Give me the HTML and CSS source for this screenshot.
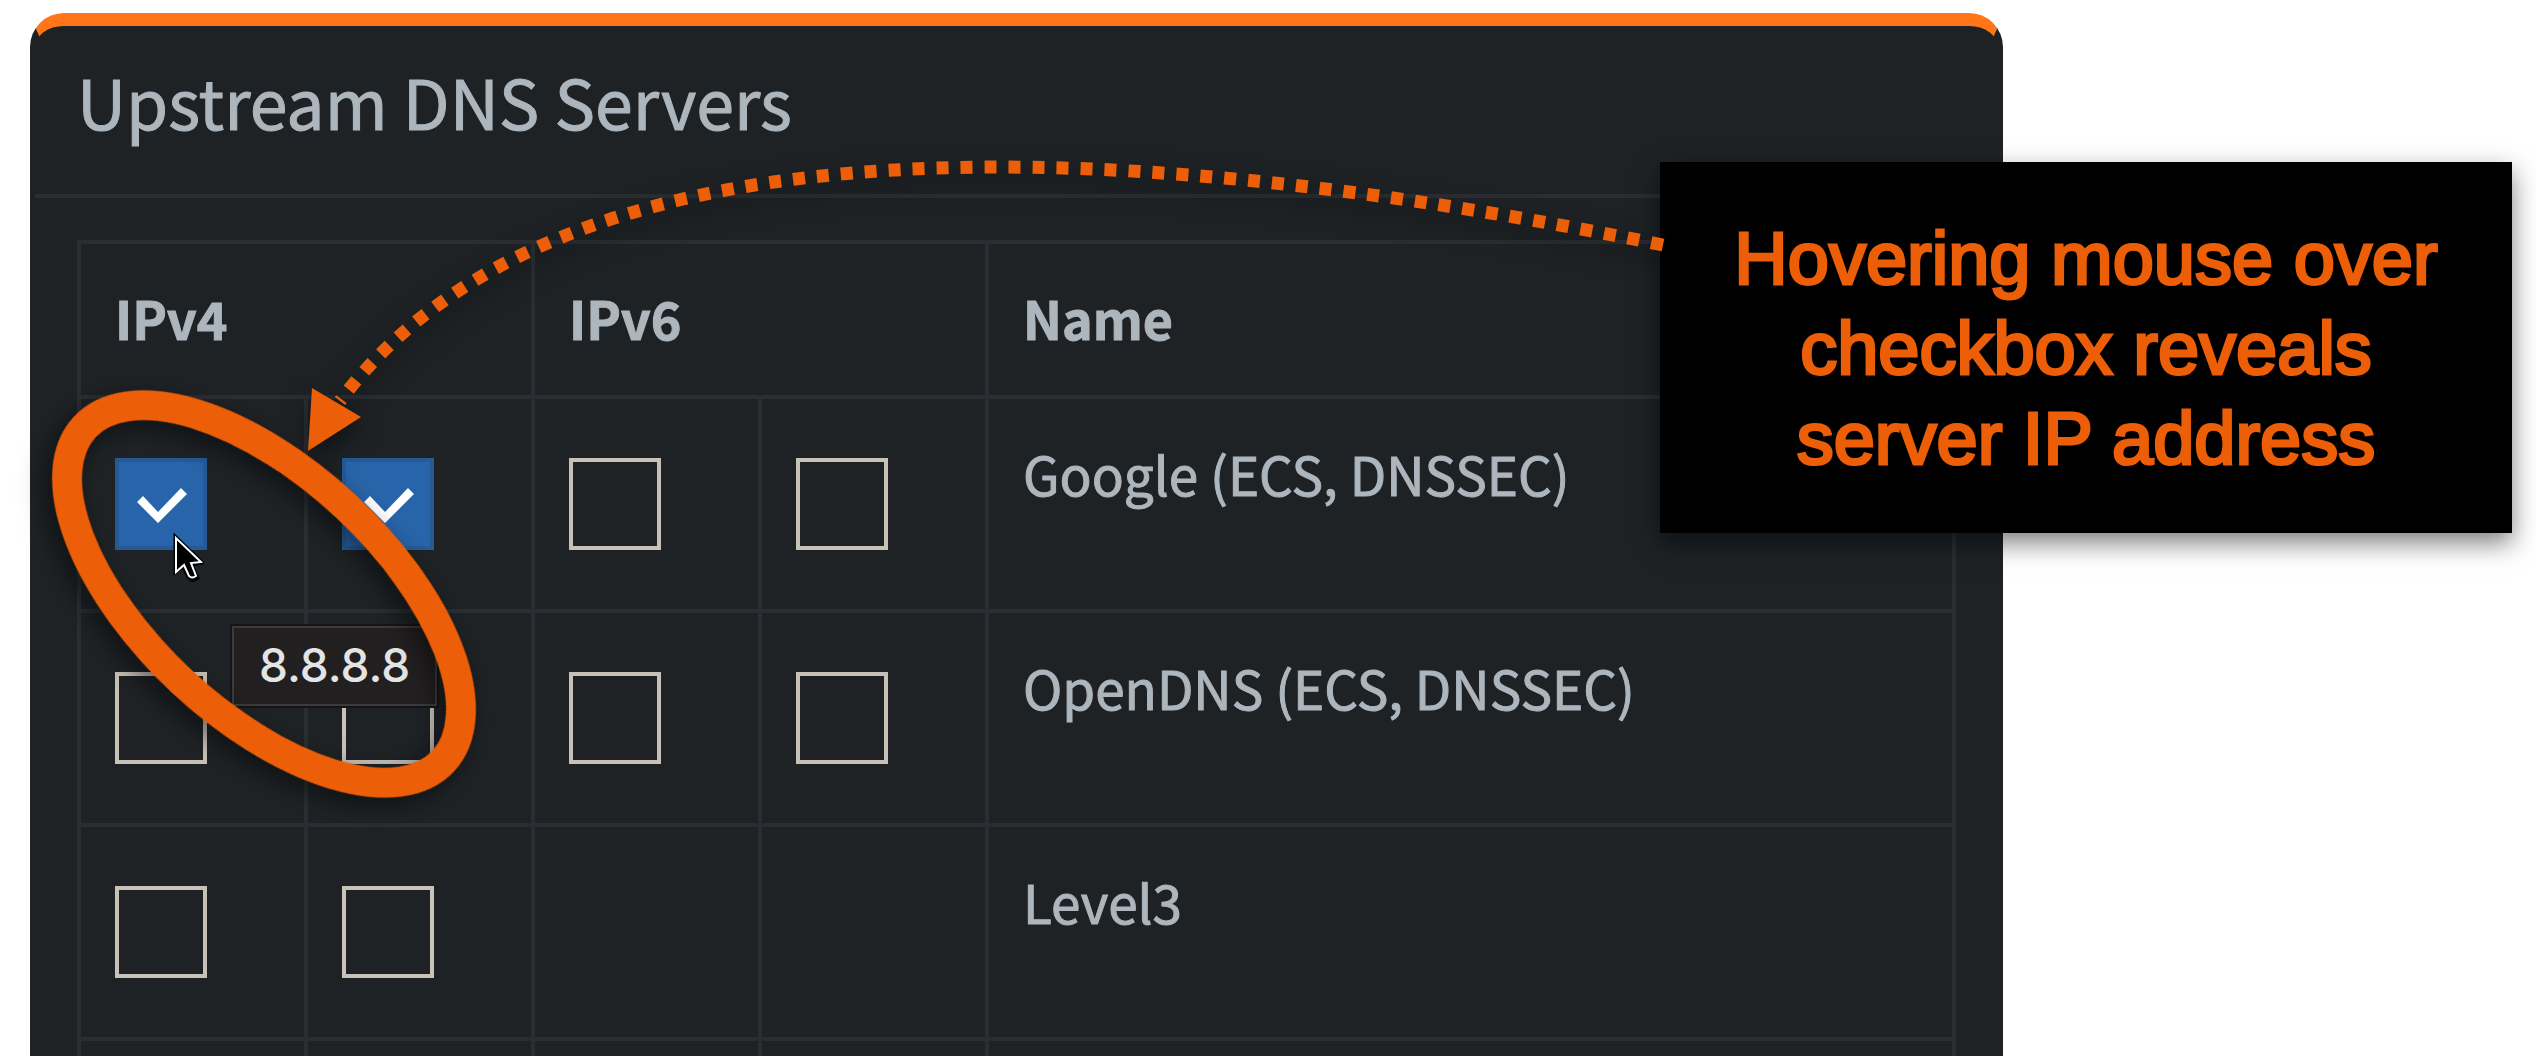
FILE: index.html
```html
<!DOCTYPE html>
<html lang="en">
<head>
<meta charset="utf-8">
<title>Upstream DNS Servers</title>
<link rel="stylesheet" href="styles.css">
</head>
<body>
<main class="page">
  <section class="card">
    <h1 class="card-title">Upstream DNS Servers</h1>
    <div class="card-body">
      <table class="servers">
        <colgroup>
          <col class="col-check"><col class="col-check"><col class="col-check"><col class="col-check"><col>
        </colgroup>
        <thead>
          <tr><th colspan="2">IPv4</th><th colspan="2">IPv6</th><th>Name</th></tr>
        </thead>
        <tbody>
          <tr>
            <td class="pick"><input class="check" type="checkbox" aria-labelledby="google" checked></td>
            <td class="pick"><input class="check" type="checkbox" aria-labelledby="google" checked></td>
            <td class="pick"><input class="check" type="checkbox" aria-labelledby="google"></td>
            <td class="pick"><input class="check" type="checkbox" aria-labelledby="google"></td>
            <td id="google">Google (ECS, DNSSEC)</td>
          </tr>
          <tr>
            <td class="pick"><input class="check" type="checkbox" aria-labelledby="opendns"></td>
            <td class="pick"><input class="check" type="checkbox" aria-labelledby="opendns"></td>
            <td class="pick"><input class="check" type="checkbox" aria-labelledby="opendns"></td>
            <td class="pick"><input class="check" type="checkbox" aria-labelledby="opendns"></td>
            <td id="opendns">OpenDNS (ECS, DNSSEC)</td>
          </tr>
          <tr>
            <td class="pick"><input class="check" type="checkbox" aria-labelledby="level3"></td>
            <td class="pick"><input class="check" type="checkbox" aria-labelledby="level3"></td>
            <td></td>
            <td></td>
            <td id="level3">Level3</td>
          </tr>
          <tr class="next-row"><td></td><td></td><td></td><td></td><td></td></tr>
        </tbody>
      </table>
    </div>
  </section>

  <div class="tooltip" role="tooltip">8.8.8.8</div>

  <svg class="cursor" width="32" height="50" viewBox="0 0 32 50" aria-hidden="true">
    <path d="M3 3 L3 40 L11 34 L16 44 Q20 50 26 45 L20 32 L31 30 Z" fill="#000" stroke="#000" stroke-width="3"/>
    <path d="M4 5 L4 39 L12 32 L17 43 Q20 46 24 43 L19 30 L29 29 Z" fill="#000" stroke="#fff" stroke-width="2"/>
  </svg>

  <p class="callout">Hovering mouse over<br>checkbox reveals<br>server IP address</p>

  <svg class="marks" width="1700" height="860" viewBox="0 0 1700 860" aria-hidden="true">
    <g class="arrow">
      <path d="M1663 245 Q615 32 340 401" fill="none" stroke="#ec5e07" stroke-width="13" stroke-dasharray="12 12"/>
      <path d="M312 388 L361 417 L308 451 Z" fill="#ec5e07"/>
    </g>
    <ellipse class="ring" cx="264" cy="594" rx="245" ry="120" transform="rotate(43 264 594)" fill="none" stroke="#ec5e07" stroke-width="30"/>
  </svg>
</main>
</body>
</html>
```
FILE: styles.css
```css
* {
  box-sizing: border-box;
}

body {
  margin: 0;
  background: #fff;
  color: #adb5bd;
  font-family: "Noto Sans CJK SC", "Noto Sans", sans-serif;
  font-size: 53px;
  line-height: 80px;
}

.page {
  position: relative;
  height: 100vh;
  padding: 13px 21% 0 30px;
  overflow: hidden;
}

.card {
  border: 5px solid #1e2225;
  border-top: 13px solid #ff7518;
  border-radius: 34px 34px 0 0;
  background: #1e2225;
  -webkit-text-stroke: 1px #adb5bd;
}

.card-title {
  margin: 0;
  padding: 25px 42px 43px;
  border-bottom: 4px solid #2a2e32;
  font-size: 68px;
  font-weight: 400;
  line-height: 100px;
}

.card-body {
  padding: 42px;
}

.servers {
  width: 100%;
  table-layout: fixed;
  border-collapse: collapse;
}

.col-check {
  width: 227px;
}

.servers th,
.servers td {
  padding: 34px 34px 0;
  border: 4px solid #2a2e32;
  text-align: left;
  vertical-align: top;
}

.servers th {
  padding-bottom: 37px;
  font-size: 52px;
  font-weight: 700;
}

.servers .pick {
  padding: 59px 34px;
}

.next-row {
  height: 214px;
}

.check {
  display: block;
  width: 92px;
  height: 92px;
  margin: 0;
  appearance: none;
  border: 4px solid #c8c1b7;
  background: transparent;
}

.check:checked {
  border-color: #255a95;
  background: #2864a9;
}

.check:checked::before {
  content: "";
  display: block;
  width: 84px;
  height: 84px;
  background: #fff;
  clip-path: polygon(18px 40px, 24px 34px, 39px 50px, 62px 26px, 68px 32px, 39px 61px);
}

.tooltip {
  position: absolute;
  left: 232px;
  top: 626px;
  padding: 0 25px 2px;
  border: 2px solid #3e3a3b;
  outline: 2px solid #141516;
  background: #221f20;
  color: #e4e4e4;
  font-family: Inter, sans-serif;
  font-size: 46px;
  font-weight: 500;
  line-height: 74px;
}

.cursor {
  position: absolute;
  left: 172px;
  top: 533px;
}

.callout {
  position: absolute;
  left: 1660px;
  top: 162px;
  width: 852px;
  margin: 0;
  padding: 52px 0 49px;
  background: #000;
  box-shadow: 0 10px 24px rgba(0, 0, 0, 0.5);
  color: #ec5e07;
  font-family: "Liberation Sans", Arial, sans-serif;
  font-size: 74px;
  line-height: 90px;
  text-align: center;
  -webkit-text-stroke: 3px #ec5e07;
}

.marks {
  position: absolute;
  left: 0;
  top: 0;
  pointer-events: none;
}

.arrow,
.ring {
  filter: drop-shadow(0 10px 12px rgba(0, 0, 0, 0.5));
}
```
